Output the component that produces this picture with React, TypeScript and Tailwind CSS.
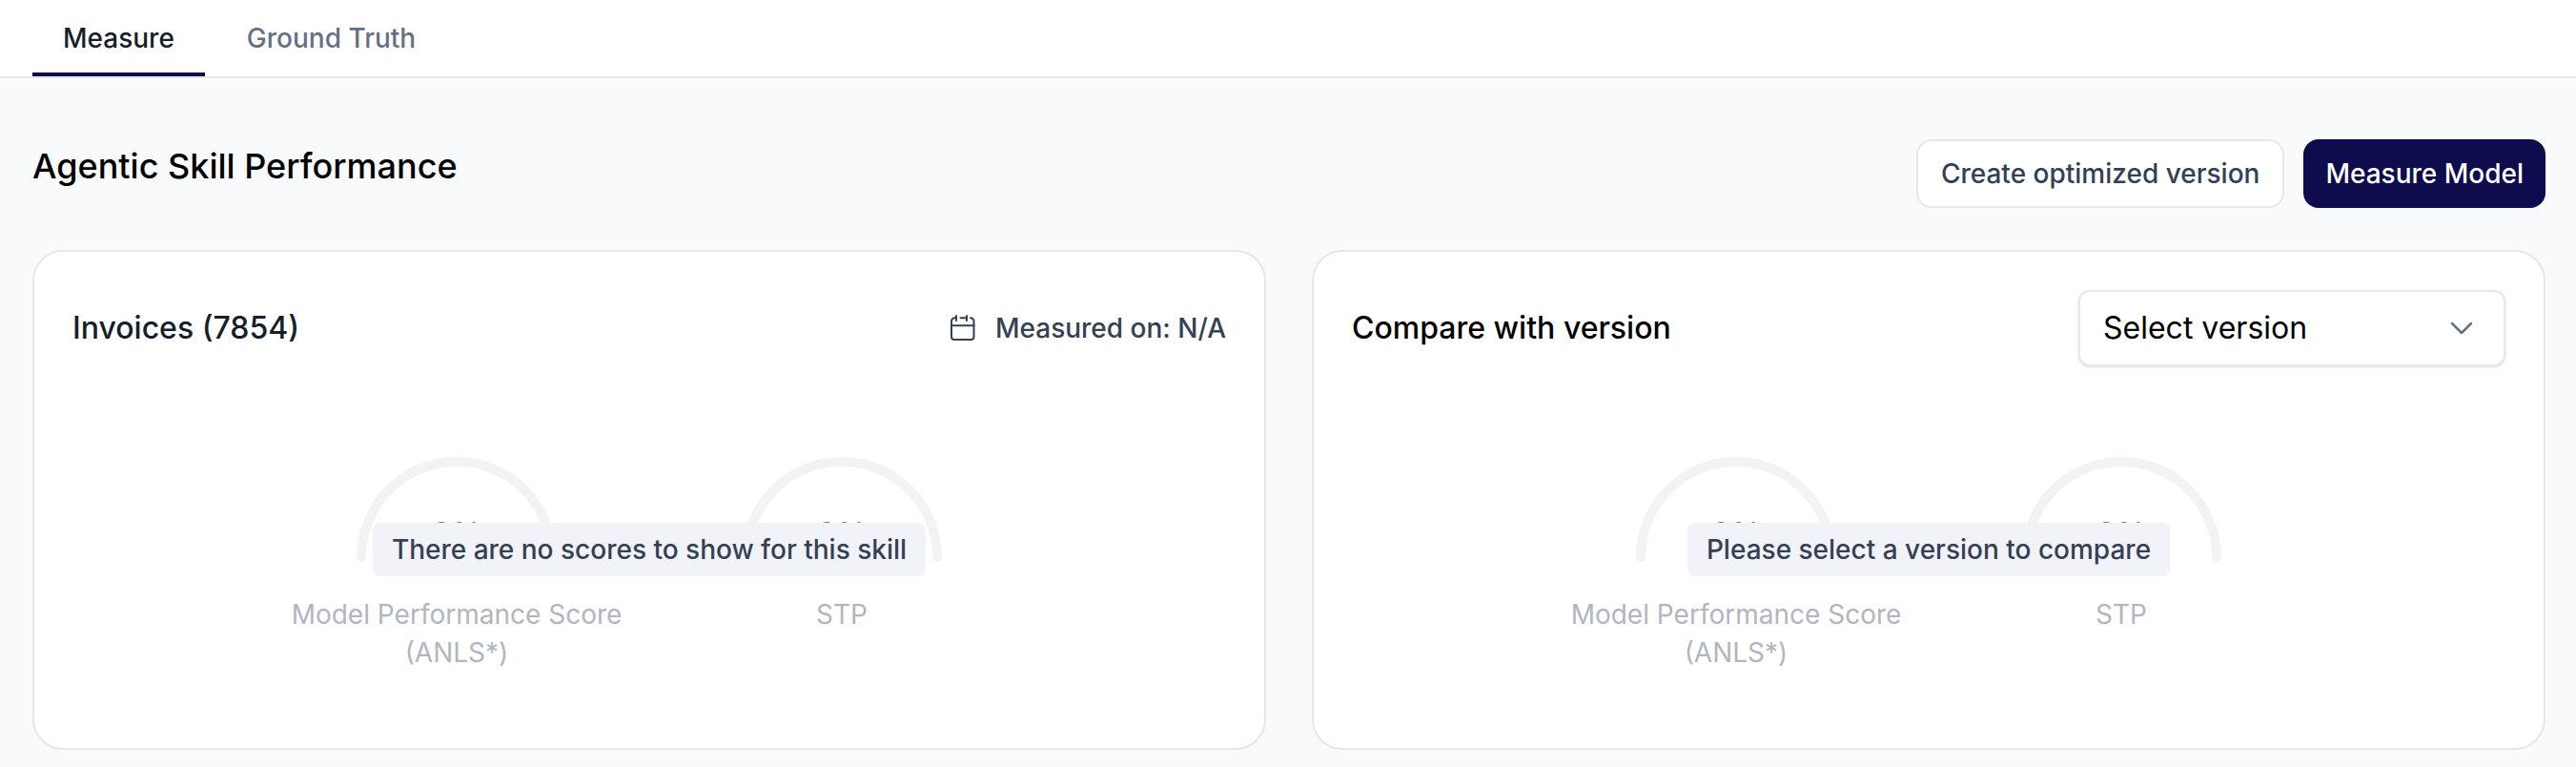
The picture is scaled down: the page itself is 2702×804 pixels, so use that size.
import { ChevronDown } from 'lucide-react'
import type { ReactNode } from 'react'

function CalendarIcon() {
  return (
    <svg width="28" height="28" viewBox="0 0 28 28" fill="none" stroke="currentColor" strokeWidth="2" strokeLinecap="round">
      <path d="M7 3.3H5.5A3.5 3.5 0 0 0 2 6.8V23a3 3 0 0 0 3 3h17.5a3 3 0 0 0 3-3V6.8A3.5 3.5 0 0 0 22 3.3" />
      <path d="M7 1v5M18 1v5M11.5 3.3H18" />
      <path d="M2 11.3h23.5" />
    </svg>
  )
}

interface GaugeProps {
  label: string
  value: number
}

function Gauge({ label, value }: GaugeProps) {
  return (
    <div className="flex w-[356px] flex-col items-center">
      <div className="relative">
        <svg width="210" height="110" viewBox="0 0 210 110" fill="none">
          <path d="M5 105a100 100 0 0 1 200 0" stroke="#f2f3f5" strokeWidth="10" strokeLinecap="round" />
        </svg>
        <span className="absolute inset-x-0 top-[61px] text-center text-[32px] leading-10 font-medium text-[#777b82]">
          {value}%
        </span>
      </div>
      <p className="mt-[35px] text-center text-[28px] leading-10 text-[#b1b6c0]">{label}</p>
    </div>
  )
}

interface ScoreCardProps {
  title: string
  titleColor: string
  message: string
  action: ReactNode
}

function ScoreCard({ title, titleColor, message, action }: ScoreCardProps) {
  return (
    <section className="flex-1 rounded-[32px] border-2 border-[#e5e7eb] bg-white p-10">
      <div className="flex h-20 items-center justify-between">
        <h2 className={`text-[32px] leading-10 font-medium ${titleColor}`}>{title}</h2>
        {action}
      </div>
      <div className="relative mt-12 pt-[47px] pb-10">
        <div className="flex justify-center gap-12">
          <Gauge label="Model Performance Score (ANLS*)" value={0} />
          <Gauge label="STP" value={0} />
        </div>
        {/* empty state, covers the gauges */}
        <div className="absolute inset-x-0 top-[116px] flex justify-center">
          <p className="rounded-lg bg-[#f2f3f8] px-5 py-2 text-[28px] leading-10 font-medium text-[#344054]">
            {message}
          </p>
        </div>
      </div>
    </section>
  )
}

export default function App() {
  return (
    <div className="min-h-screen bg-[#f9fafc] font-['Inter',sans-serif]">
      <nav className="flex gap-3 border-b-2 border-[#e5e7eb] bg-white px-[34px] text-[28px] leading-10 font-medium">
        <button className="border-b-4 border-[#0e0c4d] px-8 pt-5 pb-4 text-[#16202c]">Measure</button>
        <button className="border-b-4 border-transparent px-8 pt-5 pb-4 text-[#667085]">Ground Truth</button>
      </nav>

      <main className="pt-16 pr-8 pb-4 pl-[34px]">
        <header className="flex items-start justify-between">
          <h1 className="pt-1 text-[36px] leading-[48px] font-medium text-black">Agentic Skill Performance</h1>
          <div className="flex gap-5 text-[28px] leading-10 font-medium">
            <button className="rounded-2xl border-2 border-[#e5e7eb] bg-white px-6 py-[14px] text-[#344054]">
              Create optimized version
            </button>
            <button className="rounded-2xl bg-[#0e0c4d] px-[23px] py-4 text-white">Measure Model</button>
          </div>
        </header>

        <div className="mt-11 flex gap-12">
          <ScoreCard
            title="Invoices (7854)"
            titleColor="text-[#16202c]"
            message="There are no scores to show for this skill"
            action={
              <div className="flex items-center gap-5 text-[28px] leading-10 font-medium text-[#344054]">
                <CalendarIcon />
                <span>Measured on: N/A</span>
              </div>
            }
          />
          <ScoreCard
            title="Compare with version"
            titleColor="text-black"
            message="Please select a version to compare"
            action={
              <div className="relative w-[448px]">
                <select
                  aria-label="Select version"
                  className="block h-20 w-full appearance-none rounded-xl border-2 border-[#e5e7eb] bg-white px-6 text-[32px] text-black shadow-sm"
                >
                  <option>Select version</option>
                </select>
                <ChevronDown
                  className="pointer-events-none absolute top-5 right-[26px] size-10 text-[#667085]"
                  strokeWidth={1.5}
                />
              </div>
            }
          />
        </div>
      </main>
    </div>
  )
}
